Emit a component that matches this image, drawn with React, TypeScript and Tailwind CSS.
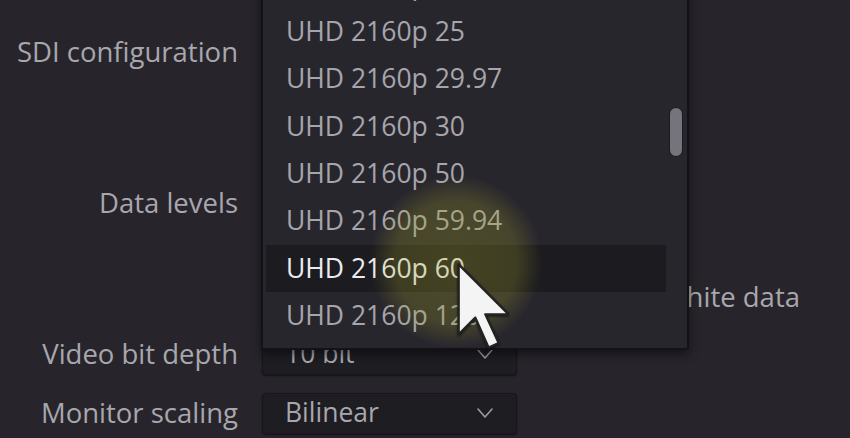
import React from 'react';

const items = [
  'UHD 2160p 24',
  'UHD 2160p 25',
  'UHD 2160p 29.97',
  'UHD 2160p 30',
  'UHD 2160p 50',
  'UHD 2160p 59.94',
  'UHD 2160p 60',
  'UHD 2160p 120',
];

function Chevron() {
  return (
    <svg width={18} height={12} viewBox="0 0 18 12" fill="none" stroke="#9d9ca4" strokeWidth={1.6} strokeLinecap="round" strokeLinejoin="round">
      <path d="M2 2l7 8 7-8" />
    </svg>
  );
}

function Cursor() {
  return (
    <svg width={54} height={90} viewBox="0 0 16 27" className="drop-shadow-[0_1px_1px_rgba(0,0,0,0.6)]">
      <path d="M1 1v21l5-5 4 9 3-1.4-4-8.6h7z" fill="#f4f4f4" stroke="#222" strokeWidth={0.7} strokeLinejoin="round" />
    </svg>
  );
}

function Row({ label, children, className }: { label: string; children?: React.ReactNode; className?: string }) {
  return (
    <div className={`flex items-center h-[48px] ${className ?? ''}`}>
      <div className="w-[238px] text-right shrink-0 whitespace-nowrap text-[27.5px]">{label}</div>
      <div className="ml-[24px] flex-1 flex items-center">{children}</div>
    </div>
  );
}

function Select({ value }: { value: string }) {
  return (
    <div className="w-[255px] h-[41px] rounded-[4px] bg-[#1e1d22] border border-[#17161a] shadow-[0_1px_2px_rgba(0,0,0,0.5)] flex items-center justify-between pl-[22px] pr-[22px] text-[26.5px]">
      <span>{value}</span>
      <Chevron />
    </div>
  );
}

export default function App() {
  return (
    <div
      className="relative w-[850px] h-[438px] overflow-hidden bg-[#27252b] text-[#a8a7ae]"
      style={{ fontFamily: '"Open Sans", "Noto Sans", sans-serif' }}
    >
      <div className="flex flex-col pt-[28px]">
        <Row label="SDI configuration" />
        <Row label="Data levels" className="mt-[103px]" />
        <div className="flex items-center h-[48px] mt-[46px] justify-end pr-[50px] text-[27.5px]">
          <span className="whitespace-nowrap">Retain sub black and super white data</span>
        </div>
        <Row label="Video bit depth" className="mt-[9px]">
          <Select value="10 bit" />
        </Row>
        <Row label="Monitor scaling" className="mt-[11px]">
          <Select value="Bilinear" />
        </Row>
      </div>

      {/* dropdown list */}
      <div className="absolute left-[261px] top-[-53px] w-[428px] bg-[#28262d] border-2 border-[#131216] rounded-[3px] shadow-[0_4px_10px_rgba(0,0,0,0.5)] pt-[12px] pb-[9px] pl-[3px] text-[26.5px]">
        {items.map((it) => {
          const active = it === 'UHD 2160p 60';
          return (
            <div
              key={it}
              className={`h-[47.3px] w-[400px] flex items-center pl-[20px] whitespace-nowrap ${active ? 'bg-[#1c1b20] text-[#ececef]' : 'text-[#a6a5ac]'}`}
            >
              {it}
            </div>
          );
        })}
        <div className="absolute left-[406px] top-[158px] w-[14px] h-[50px] rounded-full bg-[#75747c] border border-[#1a191d]" />
      </div>

      {/* click highlight */}
      <div className="absolute left-[370px] top-[176px] w-[172px] h-[172px] rounded-full bg-[radial-gradient(circle,rgba(160,160,40,0.3)_0%,rgba(160,160,40,0.26)_50%,rgba(160,160,40,0)_71%)]" />

      <div className="absolute left-[455px] top-[261px]">
        <Cursor />
      </div>
    </div>
  );
}
